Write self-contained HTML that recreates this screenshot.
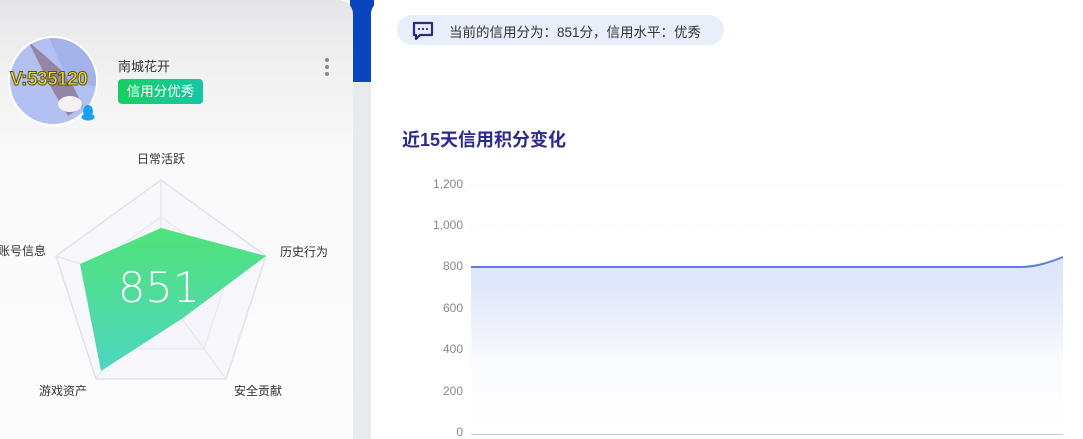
<!DOCTYPE html>
<html><head><meta charset="utf-8"><style>
*{margin:0;padding:0;box-sizing:border-box}
body{width:1083px;height:439px;overflow:hidden;background:#fff;font-family:"Liberation Sans","Noto Sans CJK SC",sans-serif;position:relative}
.gap{position:absolute;left:350px;top:0;width:24px;height:439px;background:#e9eaee}
.gap .b{position:absolute;left:0;top:0;width:24px;height:82px;background:#0a45c0}
.left{position:absolute;left:0;top:0;width:353px;height:439px;border-top-right-radius:14px;background:linear-gradient(180deg,#e6e6e8 0,#f2f2f3 80px,#f9f9fa 150px,#fcfcfc 100%);overflow:hidden}
.right{position:absolute;left:371px;top:0;width:712px;height:439px;border-top-left-radius:14px;background:#fff}
.av{position:absolute;left:8px;top:36px;width:90px;height:90px;border-radius:50%;background:#b3c1f2;overflow:hidden;border:2px solid #fff}
.vt{position:absolute;left:10px;top:69px;font-size:19px;font-weight:bold;color:#f2e030;-webkit-text-stroke:1px #55501a;letter-spacing:-0.5px}
.name{position:absolute;left:118px;top:56px;font-size:13px;color:#333}
.badge{position:absolute;left:118px;top:79px;width:85px;height:25px;border-radius:4px;background:linear-gradient(90deg,#17d063,#17c6a4);color:#fff;font-size:13.5px;line-height:25px;text-align:center}
.dot{position:absolute;left:325px;width:4px;height:4px;border-radius:50%;background:#888}
.lbl{position:absolute;font-size:12px;color:#333}
.pill{position:absolute;left:397px;top:15px;width:327px;height:30px;border-radius:15px;background:#e9eefb}
.pill span{position:absolute;left:52px;top:6px;font-size:13.5px;color:#333;white-space:nowrap}
.title{position:absolute;left:402px;top:126px;font-size:18px;font-weight:bold;color:#2c2a8e}
.yl{position:absolute;width:40px;text-align:right;left:423px;font-size:12px;color:#888}
</style></head><body>
<div class="gap"><div class="b"></div></div>
<div class="left">
  <div class="av">
    <svg width="90" height="90" style="position:absolute;left:-2px;top:-2px"><path d="M20 5 L45 55 L60 80 L75 70 L60 40 Z" fill="#8b7590" opacity=".8"/><path d="M40 0 L62 48 L88 50 L90 0 Z" fill="#a4b2ea"/><ellipse cx="62" cy="68" rx="12" ry="8" fill="#f4f0f4"/></svg>
  </div>
  <div class="vt">V:535120</div>
  <svg style="position:absolute;left:81px;top:104px" width="14" height="17"><ellipse cx="7" cy="7" rx="5" ry="6" fill="#1aa0f0"/><ellipse cx="7" cy="13" rx="6.5" ry="3.5" fill="#1aa0f0"/></svg>
  <div class="name">南城花开</div>
  <div class="badge">信用分优秀</div>
  <div class="dot" style="top:58px"></div><div class="dot" style="top:65px"></div><div class="dot" style="top:72px"></div>
  <svg style="position:absolute;left:0;top:0" width="353" height="439">
    <defs><linearGradient id="g" x1="0" y1="0" x2="0" y2="1"><stop offset="0" stop-color="#50e27a"/><stop offset="1" stop-color="#4fd6c0"/></linearGradient></defs>
    <polygon points="161,180 266,256 226,379 96,379 56,256" fill="#f7f7fc" stroke="#e2e2ec" stroke-width="1.5"/>
    <polygon points="161,217 231,267 204,349 118,349 91,267" fill="#f5f5fb" stroke="#e4e4ee" stroke-width="1"/>
    <polygon points="161,253 196,279 183,320 139,320 126,279" fill="none" stroke="#e6e6f0" stroke-width="1"/>
    <g stroke="#e2e2ec" stroke-width="1"><line x1="161" y1="290" x2="161" y2="180"/><line x1="161" y1="290" x2="266" y2="256"/><line x1="161" y1="290" x2="226" y2="379"/><line x1="161" y1="290" x2="96" y2="379"/><line x1="161" y1="290" x2="56" y2="256"/></g>
    <polygon points="161,228 266,256 183,318 101,371 80,264" fill="url(#g)"/>
    <text x="159" y="302" text-anchor="middle" font-family="DejaVu Sans,sans-serif" font-size="42" fill="#fff" font-weight="300" textLength="82" lengthAdjust="spacingAndGlyphs">851</text>
  </svg>
  <div class="lbl" style="left:137px;top:150px">日常活跃</div>
  <div class="lbl" style="left:280px;top:243px">历史行为</div>
  <div class="lbl" style="left:-2px;top:242px">账号信息</div>
  <div class="lbl" style="left:39px;top:382px">游戏资产</div>
  <div class="lbl" style="left:234px;top:382px">安全贡献</div>
</div>
<div class="right"></div>
<div class="pill">
  <svg style="position:absolute;left:15px;top:6px" width="22" height="20"><path d="M2 2 H20 V14 H8 L4 18 V14 H2 Z" fill="none" stroke="#2a2a7e" stroke-width="2.2" stroke-linejoin="round"/><circle cx="7" cy="8" r="1.1" fill="#2a2a7e"/><circle cx="11" cy="8" r="1.1" fill="#2a2a7e"/><circle cx="15" cy="8" r="1.1" fill="#2a2a7e"/></svg>
  <span>当前的信用分为：851分，信用水平：优秀</span>
</div>
<div class="title">近15天信用积分变化</div>
<div class="yl" style="top:177px">1,200</div>
<div class="yl" style="top:218px">1,000</div>
<div class="yl" style="top:259px">800</div>
<div class="yl" style="top:301px">600</div>
<div class="yl" style="top:342px">400</div>
<div class="yl" style="top:384px">200</div>
<div class="yl" style="top:425px">0</div>
<svg style="position:absolute;left:0;top:0" width="1083" height="439">
  <defs><linearGradient id="a" x1="0" y1="257" x2="0" y2="434" gradientUnits="userSpaceOnUse"><stop offset="0" stop-color="#dde5fa"/><stop offset="0.2" stop-color="#e2e9fb"/><stop offset="0.6" stop-color="#fafbfe"/><stop offset="1" stop-color="#fff"/></linearGradient></defs>
  <g stroke="#e6e6e6" stroke-dasharray="1 2"><line x1="471" y1="185" x2="1063" y2="185"/><line x1="471" y1="226" x2="1063" y2="226"/></g>
  <path d="M471 267 H1020 C1035 267 1048 263 1063 257 V434 H471 Z" fill="url(#a)"/>
  <path d="M471 267 H1020 C1035 267 1048 263 1063 257" fill="none" stroke="#5b7fe0" stroke-width="2"/>
  <line x1="471" y1="434.5" x2="1063" y2="434.5" stroke="#ccc"/>
</svg>
</body></html>
